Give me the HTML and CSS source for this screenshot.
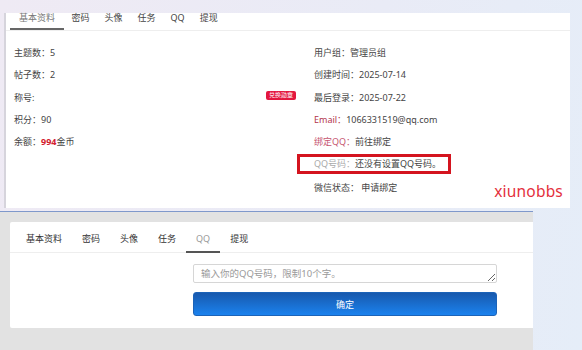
FILE: index.html
```html
<!DOCTYPE html>
<html lang="zh-CN">
<head>
  <meta charset="UTF-8" />
  <meta name="viewport" content="width=device-width, initial-scale=1.0" />
  <title>个人资料 - QQ</title>
  <link rel="stylesheet" href="styles.css">
</head>
<body>
  <div class="shot-top">
    <div class="card-top">
      <div class="tabs tabs-small">
        <span class="tab active">基本资料</span>
        <span class="tab">密码</span>
        <span class="tab">头像</span>
        <span class="tab">任务</span>
        <span class="tab">QQ</span>
        <span class="tab">提现</span>
      </div>
      <div class="info">
        <div class="col">
          <div class="row">主题数：5</div>
          <div class="row">帖子数：2</div>
          <div class="row title-row">称号:<span class="badge">兑换勋章</span></div>
          <div class="row">积分：90</div>
          <div class="row">余额：<b class="money">994</b>金币</div>
        </div>
        <div class="col">
          <div class="row">用户组：管理员组</div>
          <div class="row">创建时间：2025-07-14</div>
          <div class="row">最后登录：2025-07-22</div>
          <div class="row"><span class="lbl-email">Email：</span>1066331519@qq.com</div>
          <div class="row"><span class="lbl-qq">绑定QQ：</span>前往绑定</div>
          <div class="row qq-box"><span class="lbl-muted">QQ号码：</span>还没有设置QQ号码。</div>
          <div class="row">微信状态：&nbsp;申请绑定</div>
        </div>
      </div>
      <div class="watermark">xiunobbs</div>
    </div>
  </div>

  <div class="shot-bottom">
    <div class="gray-panel">
      <div class="card">
        <div class="tabs tabs-wide">
          <span class="tab">基本资料</span>
          <span class="tab">密码</span>
          <span class="tab">头像</span>
          <span class="tab">任务</span>
          <span class="tab active">QQ</span>
          <span class="tab">提现</span>
        </div>
        <form class="qq-form" onsubmit="return false">
          <textarea class="qq-input" rows="1" placeholder="输入你的QQ号码，限制10个字。"></textarea>
          <button class="btn-ok" type="submit">确定</button>
        </form>
      </div>
    </div>
  </div>
</body>
</html>
```

FILE: styles.css
```css
body {
  font-family: "Noto Sans", "Noto Sans CJK SC", sans-serif;
  font-size: 9px;
  color: #444;
  margin: 0;
  width: 582px;
  height: 350px;
  overflow: hidden;
  background: linear-gradient(100deg, #efeaf4 0%, #e9ebf6 60%, #e5edf8 100%);
}

/* ---- top screenshot ---- */
.shot-top {
  padding: 13px 12px 0 4px;
  height: 211px;
  box-sizing: border-box;
}

.card-top {
  position: relative;
  background: #fff;
  border-left: 2px solid #d6d4dc;
  height: 195px;
}

.tabs {
  display: flex;
  border-bottom: 1px solid #eee;
}

.tab {
  color: #444;
  border-bottom: 2px solid transparent;
}

.tabs-small {
  padding-left: 4px;
  height: 17px;
  align-items: flex-start;
}

.tabs-small .tab {
  padding: 0 7.5px;
  height: 15px;
  line-height: 10px;
}

.tabs-small .tab:first-child {
  padding: 0 9px;
}

.tabs-small .tab.active {
  color: #777;
  border-bottom-color: #666;
}

.info {
  display: grid;
  grid-template-columns: 282px 1fr;
  column-gap: 18px;
  padding: 11px 0 0 8px;
}

.row {
  height: 22.3px;
  line-height: 22px;
  color: #444;
  white-space: nowrap;
}

.title-row {
  display: flex;
  justify-content: space-between;
}

.badge {
  background: #e3173f;
  color: #fff;
  font-size: 6px;
  line-height: 9px;
  height: 9px;
  padding: 0 3px;
  border-radius: 2px;
  margin-top: 4px;
}

.money {
  color: #d3202e;
  font-weight: bold;
}

.lbl-email {
  color: #b3354b;
}

.lbl-qq {
  color: #c65670;
}

.lbl-muted {
  color: #aaa;
}

.qq-box {
  width: 154px;
  height: 20px;
  line-height: 14px;
  box-sizing: border-box;
  border: 3px solid #d4141f;
  margin: 1px 0 3px -17px;
  padding-left: 14px;
}

.watermark {
  position: absolute;
  right: 7px;
  bottom: 6px;
  font-size: 15.5px;
  letter-spacing: 0.2px;
  color: #e4303c;
}

/* ---- bottom screenshot ---- */
.shot-bottom {
  display: flex;
}

.gray-panel {
  width: 533px;
  height: 139px;
  background: #e2e2e2;
  border-top: 1px solid #7f98cb;
  padding: 10px 0 0 10px;
  box-sizing: border-box;
}

.card {
  background: #fff;
  height: 106px;
  border-radius: 2px 0 0 2px;
}

.tabs-wide {
  padding-left: 6px;
  height: 30px;
  align-items: flex-end;
  border-bottom-color: #eee;
}

.tabs-wide .tab {
  padding: 0 10px;
  height: 20px;
  line-height: 16px;
  margin-bottom: -1px;
  color: #333;
}

.tabs-wide .tab.active {
  color: #999;
  border-bottom-color: #555;
}

.qq-form {
  display: flex;
  flex-direction: column;
  gap: 9px;
  padding: 11px 0 0 183px;
  width: 304px;
}

.qq-input {
  font-family: inherit;
  font-size: 9.5px;
  height: 19px;
  line-height: 13px;
  padding: 2px 7px;
  border: 1px solid #d6d6d6;
  border-radius: 2px;
  box-sizing: border-box;
  resize: vertical;
  overflow-y: scroll;
  color: #555;
}

.qq-input::placeholder {
  color: #9a9a9a;
}

.btn-ok {
  font-family: inherit;
  font-size: 9px;
  height: 24px;
  color: #fff;
  border: 1px solid #1c63b8;
  border-radius: 3px;
  background: linear-gradient(#1859ad, #1b82ee);
  cursor: pointer;
}
```
